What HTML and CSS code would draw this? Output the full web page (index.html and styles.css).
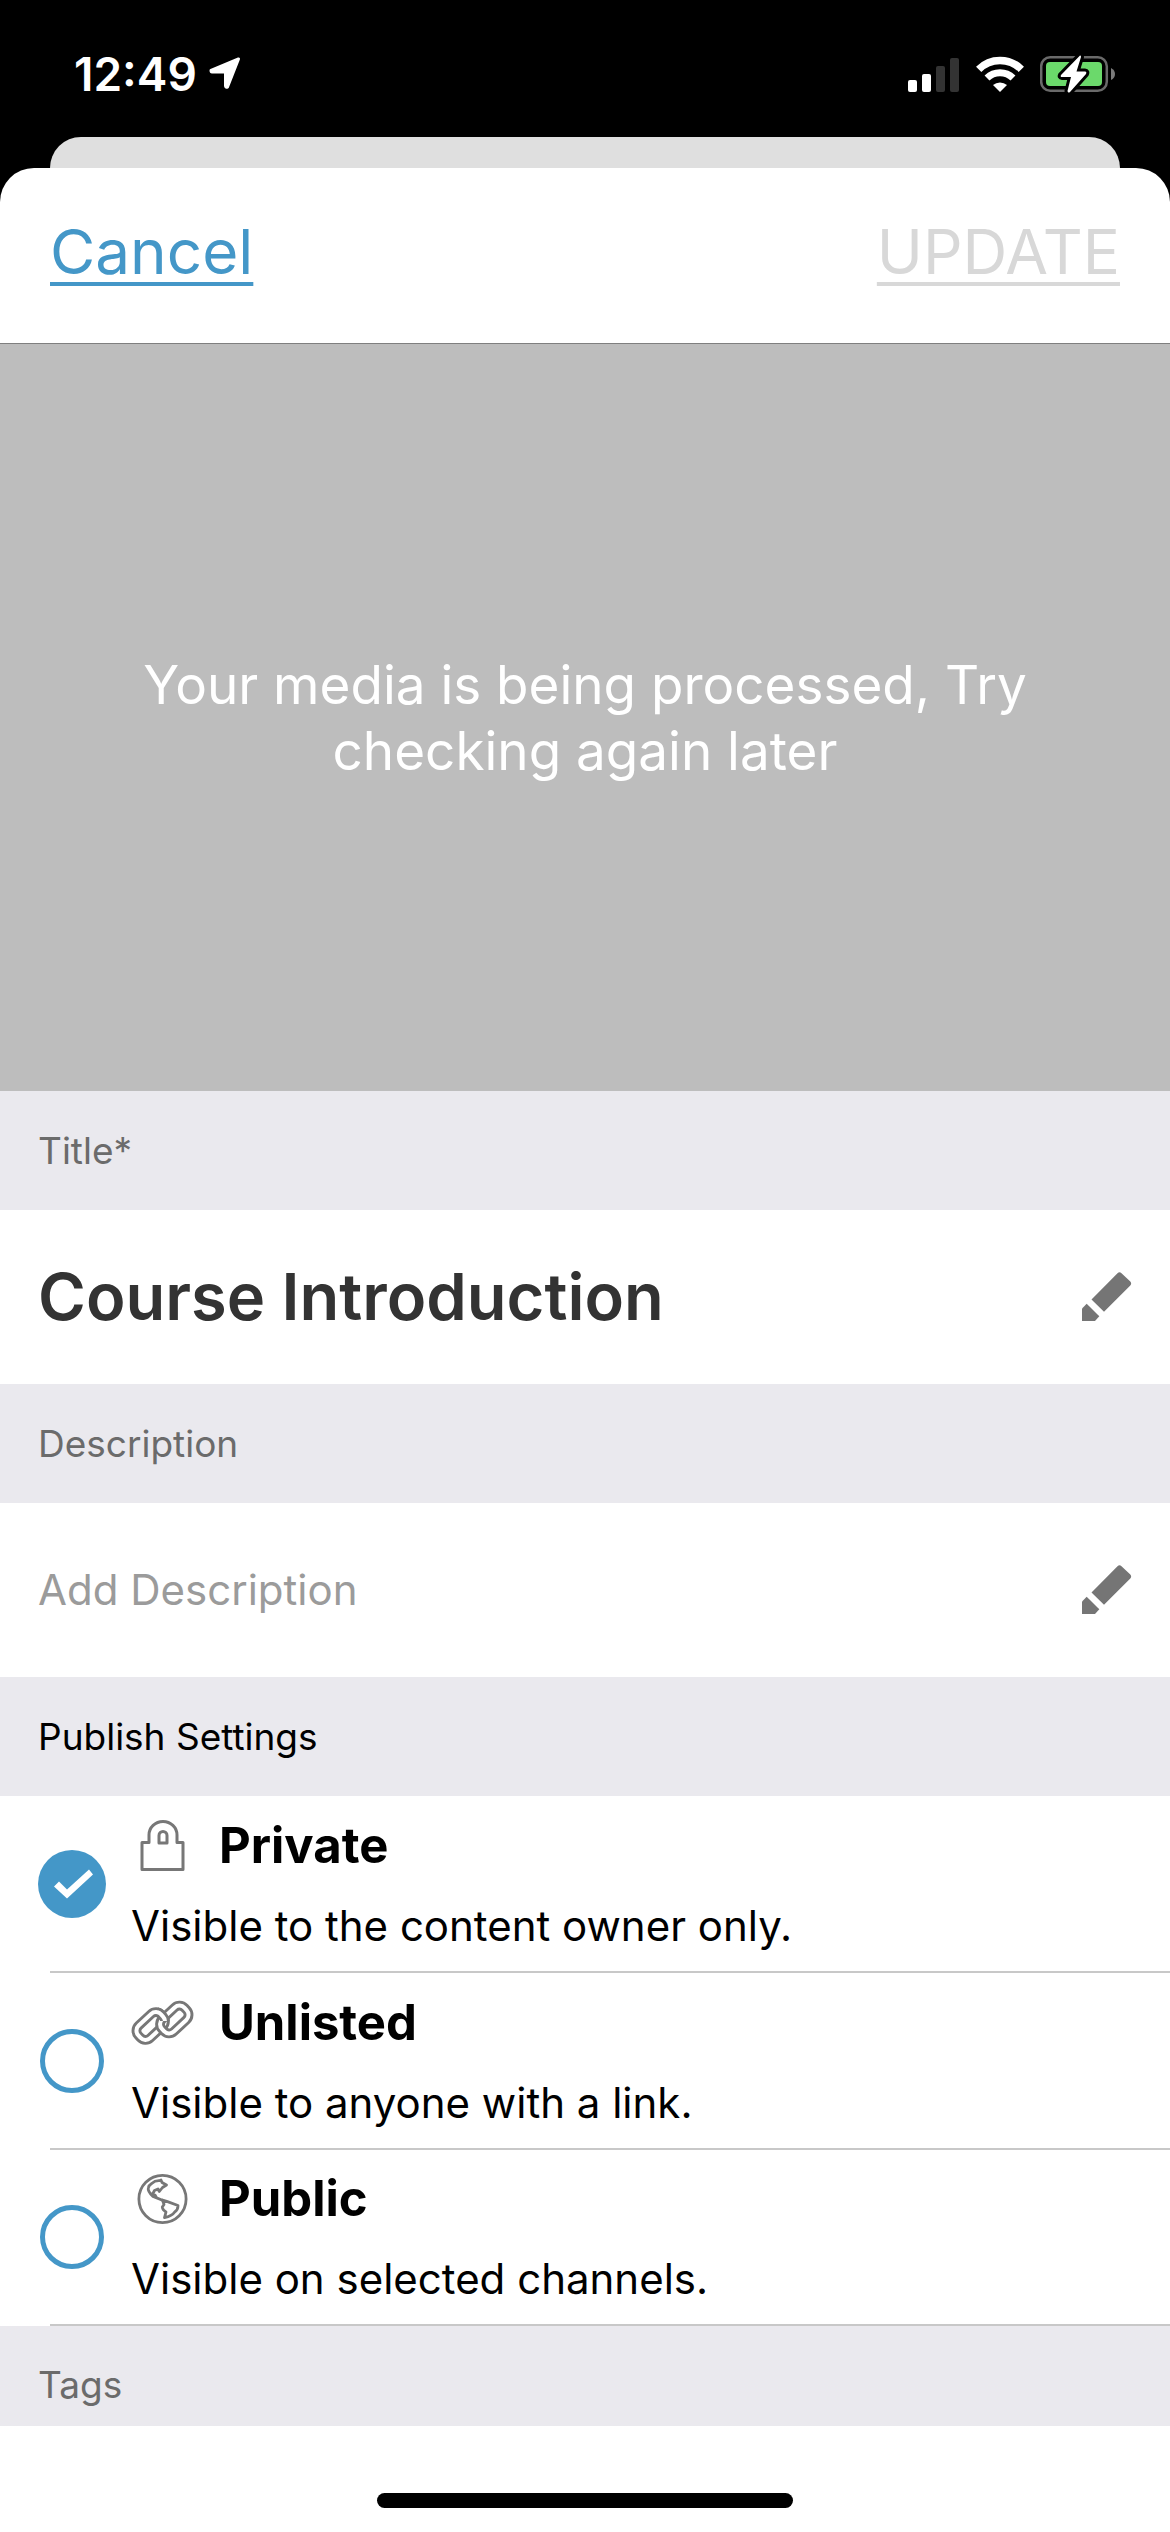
FILE: index.html
```html
<!DOCTYPE html>
<html lang="en">
<head>
    <meta charset="utf-8">
    <meta name="viewport" content="width=device-width, initial-scale=1">
    <title>Course Introduction</title>
    <link rel="stylesheet" href="styles.css">
</head>

<body>
    <div class="status-bar">
        <div class="status-left">
            <span class="time">12:49</span>
            <svg class="location" width="32" height="33" viewBox="0 0 32 33">
                <path d="M29.5 2 L2 13.5 Q2 15 3 15 H16.5 V29 Q17 31 18.5 30 Z" fill="#fff" stroke="#fff" stroke-width="3" stroke-linejoin="round"/>
            </svg>
        </div>
        <div class="status-right">
            <svg width="52" height="36" viewBox="0 0 52 36">
                <rect x="0" y="24" width="9" height="12" rx="2" fill="#fff"/>
                <rect x="14" y="18" width="9" height="18" rx="2" fill="#fff"/>
                <rect x="28" y="10" width="9" height="26" rx="2" fill="#333"/>
                <rect x="42" y="2" width="9" height="34" rx="2" fill="#333"/>
            </svg>
            <svg width="48" height="36" viewBox="0 0 48 36">
                <path d="M2.7 13.3 A30 30 0 0 1 45.3 13.3" fill="none" stroke="#fff" stroke-width="7.5"/>
                <path d="M11 22 A18.5 18.5 0 0 1 37 22" fill="none" stroke="#fff" stroke-width="7"/>
                <path d="M17 29 A11 11 0 0 1 31 29 L24 36 Z" fill="#fff"/>
            </svg>
            <svg width="76" height="40" viewBox="0 0 76 40">
                <rect x="1.2" y="3.2" width="65.6" height="33.6" rx="9" fill="none" stroke="#6a6a6a" stroke-width="2.5"/>
                <path d="M71 14 Q75 16 75 20 Q75 24 71 26 Z" fill="#7a7a7a"/>
                <rect x="6" y="8" width="56" height="24" rx="4" fill="#6bd96b"/>
                <path d="M40 1.5 L21 21 Q20 23 22 23 H31 L27.5 37 Q28 39.5 30 38 L46 20 Q47 17.5 45 17.5 H36.5 L41 3 Q41 1 40 1.5 Z" fill="#fff" stroke="#000" stroke-width="6" stroke-linejoin="round" paint-order="stroke"/>
            </svg>
        </div>
    </div>

    <div class="back-sheet"></div>

    <main class="sheet">
        <header class="nav">
            <button type="button" class="nav-btn">Cancel</button>
            <button type="submit" form="edit" class="nav-btn" disabled>UPDATE</button>
        </header>

        <div class="media">
            <p>Your media is being processed, Try checking again later</p>
        </div>

        <form id="edit">
            <label class="section" for="title">Title*</label>
            <div class="field">
                <input type="text" id="title" class="title-input" value="Course Introduction">
                <button type="button" class="edit-btn" aria-label="Edit title">
                    <svg width="50" height="50" viewBox="0 0 50 50" fill="#757575">
                        <path d="M9.5 27.5 L35.5 1.2 Q37.5 -.8 39.5 1.2 L48.3 9.5 Q50 11.5 48.3 13.5 L22 39.7 Z"/>
                        <path d="M4.7 31.7 L17.3 44.3 L13 49 H0 V36.5 Z"/>
                    </svg>
                </button>
            </div>

            <label class="section" for="description">Description</label>
            <div class="field">
                <input type="text" id="description" placeholder="Add Description">
                <button type="button" class="edit-btn" aria-label="Edit description">
                    <svg width="50" height="50" viewBox="0 0 50 50" fill="#757575">
                        <path d="M9.5 27.5 L35.5 1.2 Q37.5 -.8 39.5 1.2 L48.3 9.5 Q50 11.5 48.3 13.5 L22 39.7 Z"/>
                        <path d="M4.7 31.7 L17.3 44.3 L13 49 H0 V36.5 Z"/>
                    </svg>
                </button>
            </div>

            <h2 class="section dark" id="publish">Publish Settings</h2>
            <div class="options" role="radiogroup" aria-labelledby="publish">
                <label class="option">
                    <input type="radio" name="publish" value="private" checked>
                    <span class="option-body">
                        <span class="option-name">
                            <svg width="64" height="52" viewBox="0 0 64 52" fill="none" stroke="#777" stroke-width="3" stroke-linejoin="round">
                                <path d="M18 22.5 V15 A14 13.5 0 0 1 46 15 V22.5 H52 V49.5 H11 V22.5 Z"/>
                                <path d="M28 23 V15.5 A4 4 0 0 1 36 15.5 V23 Z"/>
                            </svg>
                            Private
                        </span>
                        <span class="option-text">Visible to the content owner only.</span>
                    </span>
                </label>
                <label class="option">
                    <input type="radio" name="publish" value="unlisted">
                    <span class="option-body">
                        <span class="option-name">
                            <svg width="64" height="52" viewBox="0 0 64 52" fill="none">
                                <defs>
                                    <clipPath id="over"><rect x="27" y="0" width="20" height="24"/></clipPath>
                                    <g id="link">
                                        <rect x="-15.5" y="-8.5" width="31" height="17" rx="7" stroke="#777" stroke-width="9.8"/>
                                        <rect x="-15.5" y="-8.5" width="31" height="17" rx="7" stroke="#fff" stroke-width="4"/>
                                    </g>
                                </defs>
                                <use href="#link" transform="translate(19.7 29) rotate(-43)"/>
                                <use href="#link" transform="translate(43.3 22.5) rotate(-43)"/>
                                <g clip-path="url(#over)">
                                    <use href="#link" transform="translate(19.7 29) rotate(-43)"/>
                                </g>
                            </svg>
                            Unlisted
                        </span>
                        <span class="option-text">Visible to anyone with a link.</span>
                    </span>
                </label>
                <label class="option">
                    <input type="radio" name="publish" value="public">
                    <span class="option-body">
                        <span class="option-name">
                            <svg width="64" height="52" viewBox="-6 0 64 52" fill="none" stroke="#777" stroke-width="2.8" stroke-linejoin="round" stroke-linecap="round">
                                <circle cx="25.5" cy="26" r="23.6"/>
                                <path d="M14.7 10.5 Q18 7.5 22.3 7.7 L24 7 L25 9.5 L29.5 12 L25.5 14.5 L22.3 18.5 L21 16 L17.5 17.5 L15.7 21 L18 22 L19.5 24.7 L26 27.5 L16 23.5 Q10.5 18 11.3 15 Q12 12 14.7 10.5 Z"/>
                                <path d="M25.5 27 L30.5 28.7 L41 32.5 Q41 37 37.7 39 Q35 43 27.5 44.7 L29 39 Q25.5 37 25.3 34 L27 31.5 Z"/>
                            </svg>
                            Public
                        </span>
                        <span class="option-text">Visible on selected channels.</span>
                    </span>
                </label>
            </div>

            <h2 class="section tags">Tags</h2>
        </form>

        <footer class="home">
            <div class="home-bar"></div>
        </footer>
    </main>
</body>

</html>
```

FILE: styles.css
```css
* {
    box-sizing: border-box;
}

body {
    margin: 0;
    min-height: 100vh;
    display: flex;
    flex-direction: column;
    background-color: #000;
    font-family: Inter, "Liberation Sans", sans-serif;
    color: #000;
}

svg {
    display: block;
    flex: none;
}

button {
    font-family: inherit;
    background: none;
    border: none;
    padding: 0;
    cursor: pointer;
}

/* status bar */
.status-bar {
    height: 137px;
    padding: 10px 54px 0 74px;
    display: flex;
    align-items: center;
    justify-content: space-between;
}

.status-left {
    display: flex;
    align-items: center;
    gap: 12px;
    color: #fff;
}

.time {
    font-size: 46px;
    line-height: 56px;
    font-weight: 600;
}

.status-right {
    display: flex;
    align-items: center;
    gap: 16px;
}

/* sheets */
.back-sheet {
    height: 31px;
    margin: 0 50px;
    border-radius: 31px 31px 0 0;
    background-color: #dfdfdf;
}

.sheet {
    flex: 1;
    display: flex;
    flex-direction: column;
    border-radius: 34px 34px 0 0;
    background-color: #fff;
}

.nav {
    height: 176px;
    padding: 0 50px 8px;
    display: flex;
    align-items: center;
    justify-content: space-between;
    border-bottom: 1px solid #7f7f7f;
}

.nav-btn {
    font-size: 62px;
    line-height: 80px;
    color: #4497c8;
    text-decoration: underline;
    text-decoration-thickness: 4px;
    text-underline-offset: 8px;
    text-decoration-skip-ink: none;
}

.nav-btn:disabled {
    color: #d8d8d8;
    cursor: default;
}

.media {
    height: 747px;
    padding: 0 120px;
    display: flex;
    align-items: center;
    justify-content: center;
    background-color: #bdbdbd;
}

.media p {
    margin: 0;
    font-size: 53px;
    line-height: 66px;
    text-align: center;
    color: #fff;
}

/* form */
.section {
    display: flex;
    align-items: center;
    height: 119px;
    margin: 0;
    padding: 0 38px;
    font-size: 37px;
    line-height: 44px;
    font-weight: 400;
    color: #6b6b6b;
    background-color: #eae9ee;
}

.section.dark {
    color: #000;
}

.section.tags {
    height: 100px;
    padding-top: 18px;
}

.field {
    display: flex;
    align-items: center;
    height: 174px;
    padding: 0 38px;
}

.field input {
    flex: 1;
    min-width: 0;
    border: none;
    outline: none;
    padding: 0;
    background: none;
    font-family: inherit;
    font-size: 42px;
    line-height: 52px;
    color: #333;
}

.field input::placeholder {
    color: #9b9b9b;
    opacity: 1;
}

.field .title-input {
    font-size: 65px;
    line-height: 80px;
    font-weight: 600;
}

.option {
    display: flex;
    align-items: center;
    height: 177px;
    padding: 0 0 2px 38px;
    background: linear-gradient(#c8c8c8, #c8c8c8) 50px 100% / 100% 2px no-repeat;
}

.option:last-child {
    height: 176px;
}

.option input {
    appearance: none;
    flex: none;
    width: 64px;
    height: 64px;
    margin: 0 2px;
    border: 5px solid #4497c8;
    border-radius: 50%;
}

.option input:checked {
    width: 68px;
    height: 68px;
    margin: 0;
    border: none;
    background-color: #4497c8;
}

/* tick */
.option input:checked::after {
    content: "";
    display: block;
    height: 68px;
    background-color: #fff;
    clip-path: polygon(16px 37px, 21px 32px, 29px 40px, 51px 20px, 55px 25px, 29px 49px);
}

.option-body {
    padding-left: 25px;
}

.option-name {
    display: flex;
    align-items: center;
    gap: 24px;
    font-size: 49px;
    line-height: 60px;
    font-weight: 700;
}

.option-text {
    display: block;
    margin-top: 24px;
    font-size: 42px;
    line-height: 52px;
}

.home {
    flex: 1;
    display: flex;
    align-items: flex-end;
    justify-content: center;
    min-height: 106px;
    padding-bottom: 24px;
}

.home-bar {
    width: 416px;
    height: 15px;
    border-radius: 8px;
    background-color: #000;
}
```
